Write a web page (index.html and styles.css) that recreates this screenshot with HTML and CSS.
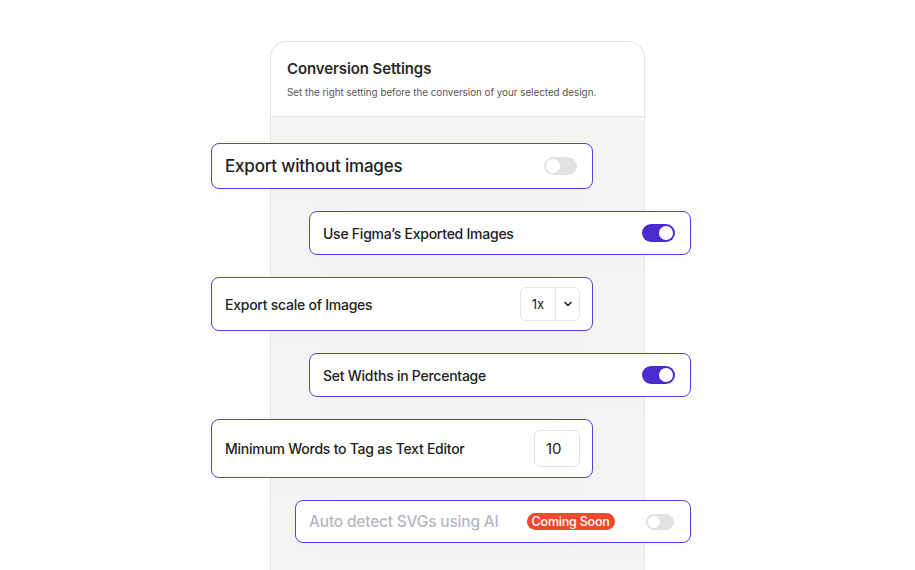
FILE: index.html
```html
<!DOCTYPE html>
<html lang="en">
<head>
    <meta charset="UTF-8">
    <meta name="viewport" content="width=device-width, initial-scale=1.0">
    <title>Conversion Settings</title>
    <link rel="stylesheet" href="styles.css">
</head>
<body>
    <div class="stage">
        <div class="panel">
            <div class="panel-head">
                <h2>Conversion Settings</h2>
                <p>Set the right setting before the conversion of your selected design.</p>
            </div>
        </div>

        <div class="options">
            <div class="option left big h46">
                <span class="label">Export without images</span>
                <span class="toggle"></span>
            </div>
            <div class="option right h44">
                <span class="label">Use Figma’s Exported Images</span>
                <span class="toggle on"></span>
            </div>
            <div class="option left h54 tight">
                <span class="label">Export scale of Images</span>
                <div class="select">
                    <span class="select-value">1x</span>
                    <span class="select-arrow">
                        <svg width="10" height="10" viewBox="0 0 10 10"><path d="M2 3.5 5 6.5 8 3.5" fill="none" stroke="#222" stroke-width="1.5" stroke-linecap="round" stroke-linejoin="round"/></svg>
                    </span>
                </div>
            </div>
            <div class="option right h44">
                <span class="label">Set Widths in Percentage</span>
                <span class="toggle on"></span>
            </div>
            <div class="option left h59 tight">
                <span class="label">Minimum Words to Tag as Text Editor</span>
                <div class="number">10</div>
            </div>
            <div class="option wide h43 disabled">
                <span class="label">Auto detect SVGs using AI</span>
                <span class="badge">Coming Soon</span>
                <span class="toggle small"></span>
            </div>
        </div>
    </div>
</body>
</html>
```

FILE: styles.css
```css
body {
    margin: 0;
    background: #fff;
    font-family: Inter, "Open Sans", sans-serif;
    color: #222;
}

.stage {
    display: grid;
    width: 915px;
    height: 570px;
    overflow: hidden;
}

.panel, .options {
    grid-row: 1;
    grid-column: 1;
}

.panel {
    margin: 41px 0 0 270px;
    width: 375px;
    box-sizing: border-box;
    height: 529px;
    background: #f5f5f5;
    border: 1px solid #e6e6e6;
    border-bottom: none;
    border-radius: 16px 16px 0 0;
}

.panel-head {
    background: #fff;
    border-radius: 16px 16px 0 0;
    border-bottom: 1px solid #e2e2e2;
    padding: 17px 16px 0;
    height: 57px;
}

.panel-head h2 {
    margin: 0;
    font-size: 15px;
    font-weight: 600;
    color: #2a2a2a;
    letter-spacing: -0.1px;
}

.panel-head p {
    margin: 9px 0 0;
    font-size: 9.8px;
    color: #555;
}

.options {
    display: flex;
    flex-direction: column;
    gap: 22px;
    padding-top: 143px;
}

.option {
    display: flex;
    align-items: center;
    box-sizing: border-box;
    width: 382px;
    padding: 0 15px 0 13px;
    background: #fff;
    border: 1.5px solid #5b40d8;
    border-radius: 8px;
    box-shadow: 0 6px 30px rgba(70, 50, 170, 0.025);
}

.option.tight { padding-right: 12px; }

.option.left { margin-left: 211px; }
.option.right { margin-left: 309px; }
.option.wide { margin-left: 295px; width: 396px; }

.h43 { height: 43px; }
.h44 { height: 44px; }
.h46 { height: 46px; }
.h54 { height: 54px; }
.h59 { height: 59px; }

.label {
    font-size: 14px;
    font-weight: 500;
    color: #222;
    letter-spacing: -0.25px;
}

.big .label {
    font-size: 17px;
    letter-spacing: -0.2px;
}

.disabled .label {
    font-size: 15.5px;
    color: #b7b7c0;
    letter-spacing: -0.2px;
}

.toggle {
    margin-left: auto;
    position: relative;
    width: 33px;
    height: 18px;
    border-radius: 9px;
    background: #e2e2e2;
}

.toggle::after {
    content: "";
    position: absolute;
    top: 2px;
    left: 2px;
    width: 14px;
    height: 14px;
    border-radius: 50%;
    background: #fff;
}

.toggle.on {
    background: #4a2bd0;
}

.toggle.on::after {
    left: auto;
    right: 2px;
}

.toggle.small {
    width: 28px;
    height: 16px;
    margin-right: 1px;
}

.toggle.small::after {
    width: 12px;
    height: 12px;
}

.select {
    margin-left: auto;
    display: flex;
    height: 34px;
    border: 1px solid #e6e6e6;
    border-radius: 6px;
    box-sizing: border-box;
}

.select-value {
    width: 34px;
    display: flex;
    align-items: center;
    justify-content: center;
    font-size: 13px;
    border-right: 1px solid #e6e6e6;
}

.select-arrow {
    width: 23px;
    display: flex;
    align-items: center;
    justify-content: center;
}

.number {
    margin-left: auto;
    width: 46px;
    height: 37px;
    box-sizing: border-box;
    border: 1px solid #e2e2e2;
    border-radius: 6px;
    display: flex;
    align-items: center;
    padding-left: 11px;
    font-size: 15px;
}

.badge {
    margin-left: 28px;
    background: #f04a2e;
    color: #fff;
    font-size: 12.5px;
    font-weight: 500;
    padding: 1px 5px;
    border-radius: 9px;
    line-height: 15px;
    letter-spacing: -0.2px;
}
```
